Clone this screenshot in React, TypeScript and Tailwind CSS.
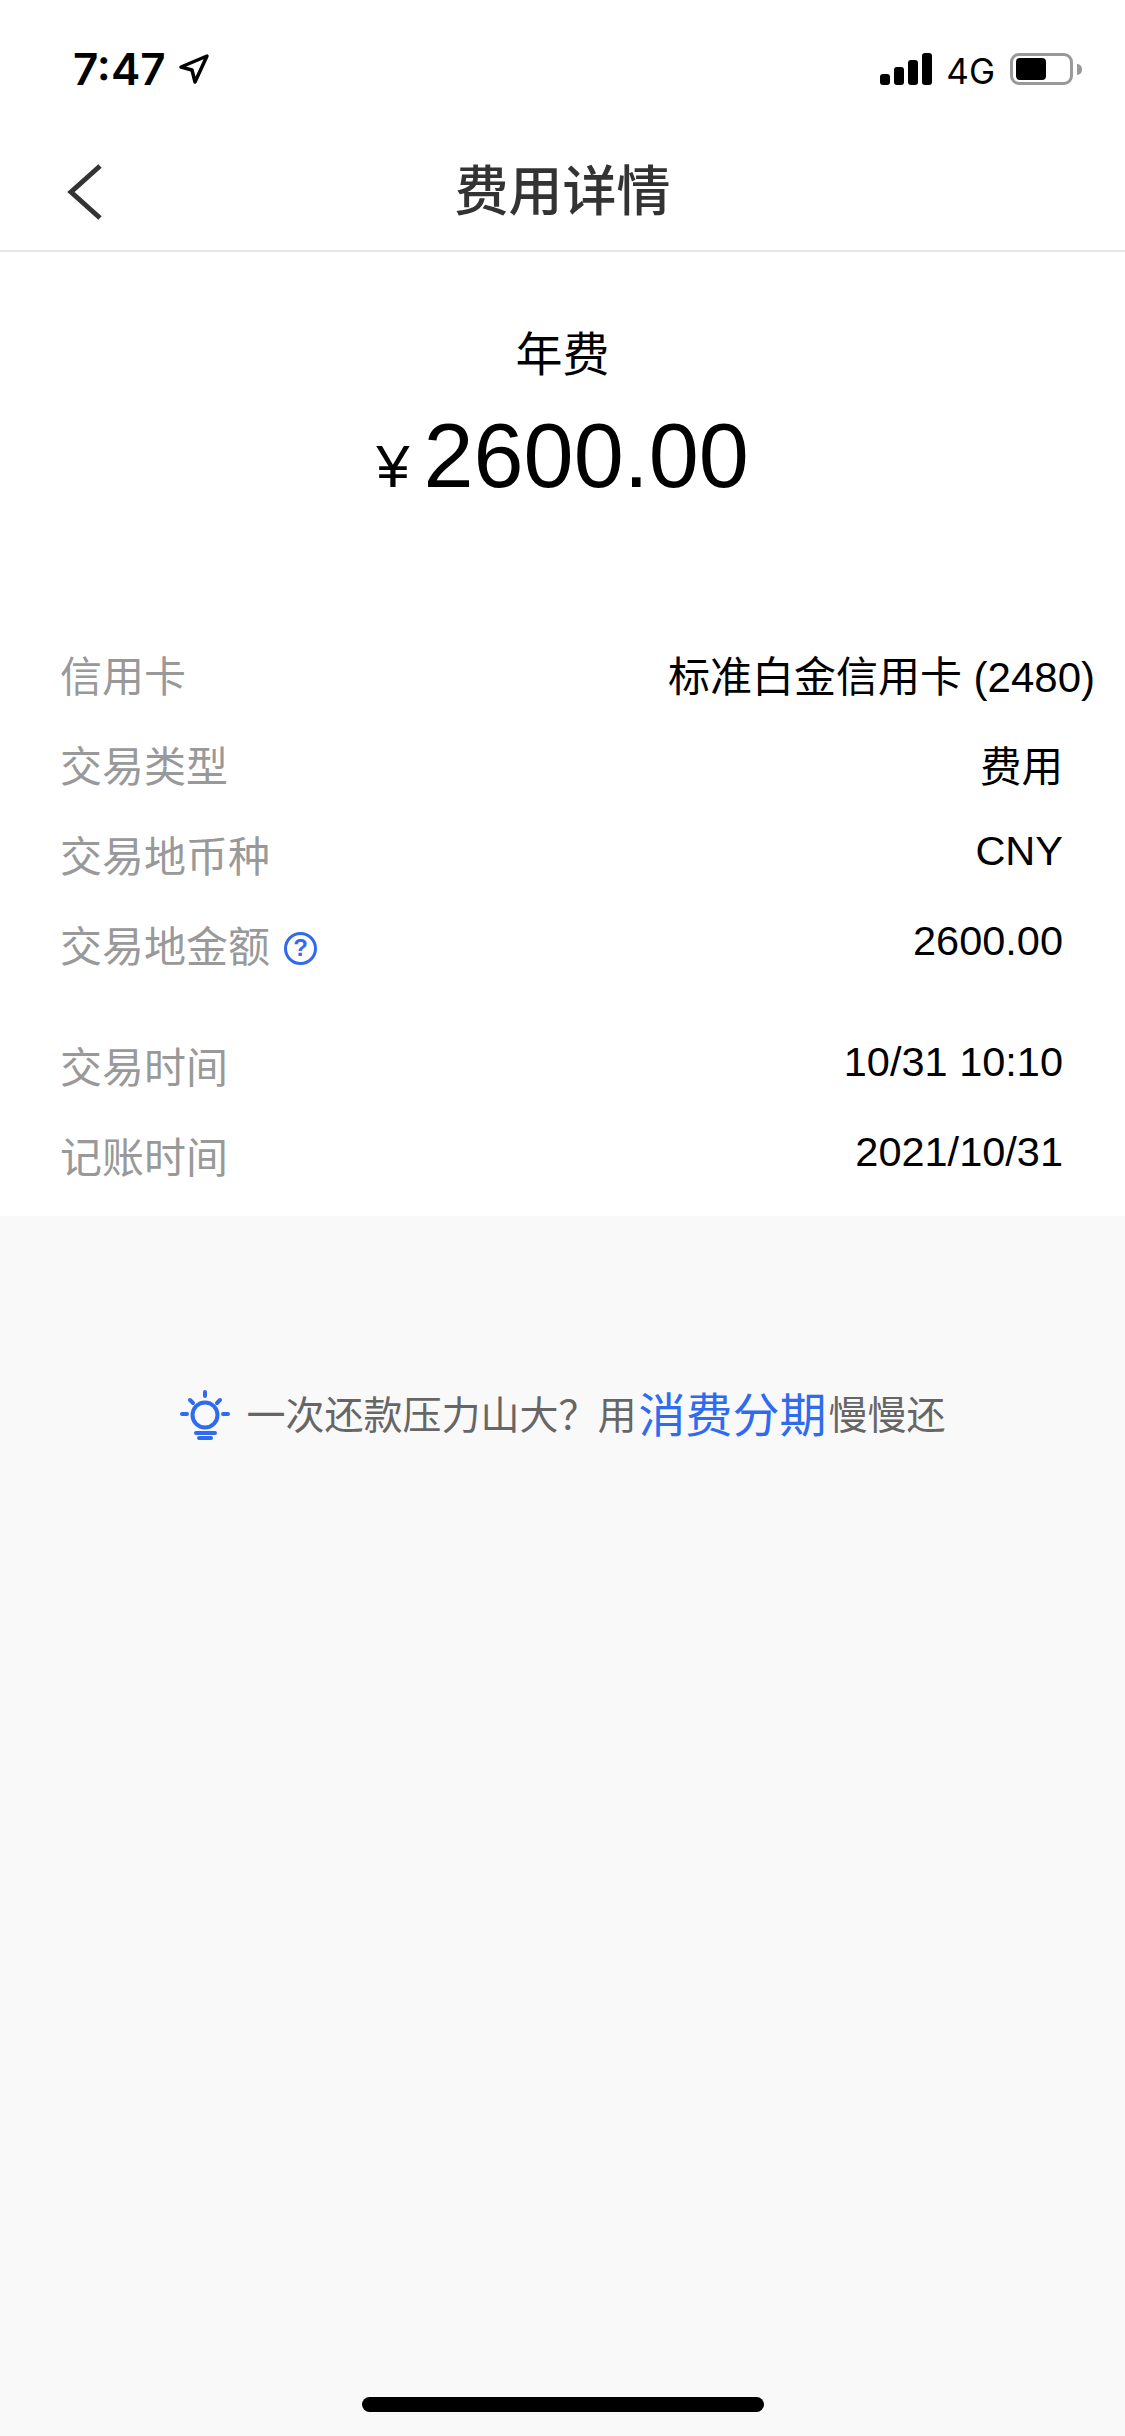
const FONT = "font-['Liberation_Sans','Noto_Sans_CJK_SC',sans-serif]"

function StatusBar() {
  return (
    <div className="flex h-[134px] items-start justify-between pl-[73px] pr-[43px] pt-[53px]">
      <div className="flex h-[32px] items-center gap-[12px]">
        <span className="font-['Inter',sans-serif] text-[44px] font-semibold leading-[32px] text-black">7:47</span>
        <svg width="32" height="32" viewBox="0 0 32 32" fill="none" stroke="#000" strokeWidth="3.5" strokeLinejoin="round">
          <path d="M29 3 L3 14 L14 17 L17 29 Z" />
        </svg>
      </div>
      <div className="flex h-[32px] items-center">
        <div className="flex items-end gap-[4px]">
          <span className="h-[11px] w-[10px] rounded-[3px] bg-black" />
          <span className="h-[18px] w-[10px] rounded-[3px] bg-black" />
          <span className="h-[25px] w-[10px] rounded-[3px] bg-black" />
          <span className="h-[32px] w-[10px] rounded-[3px] bg-black" />
        </div>
        <span className="ml-[14px] mt-[4px] font-['Inter',sans-serif] text-[35px] font-normal leading-[32px] text-black">4G</span>
        <div className="ml-[15px] flex items-center gap-[4px]">
          <div className="flex h-[32px] w-[63px] items-center rounded-[9px] border-[3px] border-[#999999] pl-[3px]">
            <div className="h-[22px] w-[30px] rounded-[4px] bg-black" />
          </div>
          <div className="h-[11px] w-[5px] rounded-r-full bg-[#999999]" />
        </div>
      </div>
    </div>
  )
}

function NavBar() {
  return (
    <header className="relative flex h-[118px] items-center justify-center border-b-[2px] border-[#e6e6e6]">
      <svg className="absolute left-[66px] top-[30px]" width="38" height="56" viewBox="0 0 38 56" fill="none" stroke="#333333" strokeWidth="5">
        <path d="M34 2 L5 28 L34 54" />
      </svg>
      <h1 className="text-[54px] font-medium leading-none text-[#333333]">费用详情</h1>
    </header>
  )
}

function Row({ label, value, help, wide, cjk }: { label: string; value: string; help?: boolean; wide?: boolean; cjk?: boolean }) {
  let valueClass = "-translate-y-[7px] text-[41.5px] leading-none text-black"
  if (wide) valueClass = "text-[42px] leading-none text-black"
  if (cjk) valueClass = "text-[41.5px] leading-none text-black"
  return (
    <div className={`flex h-[90px] items-center justify-between pl-[60px] ${wide ? "pr-[30px]" : "pr-[62px]"}`}>
      <div className="flex items-center gap-[14px]">
        <span className="text-[42px] leading-none text-[#999999]">{label}</span>
        {help && (
          <span className="flex size-[33px] items-center justify-center rounded-full border-[3px] border-[#2f6bef] text-[24px] font-bold leading-none text-[#2f6bef]">
            ?
          </span>
        )}
      </div>
      <span className={valueClass}>{value}</span>
    </div>
  )
}

export default function App() {
  return (
    <div className={`${FONT} flex min-h-[2436px] w-[1125px] flex-col bg-[#f9f9f9]`}>
      <div className="bg-white pb-[12px]">
        <StatusBar />
        <NavBar />

        <section className="flex flex-col items-center pt-[73px]">
          <p className="text-[47px] leading-[60px] text-black">年费</p>
          <p className="mt-[21px] flex items-baseline gap-[14px] text-black">
            <span className="text-[60px] leading-none">¥</span>
            <span className="text-[90px] leading-[100px]">2600.00</span>
          </p>
        </section>

        <section className="mt-[127px]">
          <Row label="信用卡" value="标准白金信用卡 (2480)" wide />
          <Row label="交易类型" value="费用" cjk />
          <Row label="交易地币种" value="CNY" />
          <Row label="交易地金额" value="2600.00" help />
          <div className="h-[31px]" />
          <Row label="交易时间" value="10/31 10:10" />
          <Row label="记账时间" value="2021/10/31" />
        </section>
      </div>

      <div className="mt-[173px] flex items-center justify-center text-[39px] leading-none text-[#666666]">
        <svg className="mr-[15px]" width="52" height="52" viewBox="0 0 52 52" fill="none" stroke="#2f6bef" strokeWidth="4" strokeLinecap="round">
          <circle cx="26" cy="26" r="12.5" />
          <path d="M26 3v4M11 11l3 3M41 11l-3 3M3 25h5M44 25h5" />
          <path d="M17 44h19M20 49h12" />
        </svg>
        <span>一次还款压力山大？用</span>
        <span className="mx-[2px] text-[47px] text-[#2f6bef]">消费分期</span>
        <span>慢慢还</span>
      </div>

      <div className="mt-auto flex justify-center pb-[24px]">
        <div className="h-[15px] w-[402px] rounded-[8px] bg-black" />
      </div>
    </div>
  )
}
